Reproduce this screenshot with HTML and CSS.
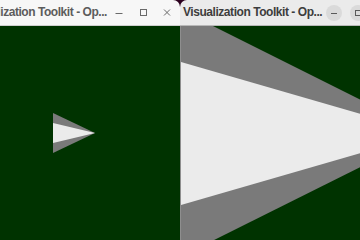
FILE: index.html
```html
<!DOCTYPE html>
<html>
<head>
<meta charset="utf-8">
<link rel="stylesheet" href="styles.css">
</head>
<body>
<div class="desktop">
  <div class="window win-left">
    <div class="titlebar tb-left">
      <span class="title">Visualization Toolkit - Op...</span>
      <div class="controls">
        <span class="btn"><svg width="10" height="10" viewBox="0 0 10 10"><path d="M1.5 5.5h7" stroke="#6a6a6a" stroke-width="1"/></svg></span>
        <span class="btn"><svg width="10" height="10" viewBox="0 0 10 10"><rect x="2.5" y="1.5" width="6" height="6" fill="none" stroke="#6a6a6a" stroke-width="1"/></svg></span>
        <span class="btn"><svg width="10" height="10" viewBox="0 0 10 10"><path d="M2 1.5l6 6M8 1.5l-6 6" stroke="#6a6a6a" stroke-width="1"/></svg></span>
      </div>
    </div>
    <div class="content">
      <svg class="scene" width="180" height="214" viewBox="0 0 180 214">
        <polygon points="53,87 95,107 53,127" fill="#7a7a7a"/>
        <polygon points="53,97 95,107 53,117" fill="#ebebeb"/>
      </svg>
    </div>
  </div>
  <div class="window win-right">
    <div class="titlebar tb-right">
      <span class="title">Visualization Toolkit - Op...</span>
      <div class="rcontrols">
        <span class="rbtn"><svg width="16" height="16" viewBox="0 0 16 16"><path d="M5 8.5h6" stroke="#5a5a5a" stroke-width="1"/></svg></span>
        <span class="rbtn"><svg width="16" height="16" viewBox="0 0 16 16"><rect x="5.5" y="5.5" width="5" height="5" fill="none" stroke="#5a5a5a" stroke-width="1"/></svg></span>
      </div>
    </div>
    <div class="content content-right">
      <svg class="scene" width="220" height="214" viewBox="0 0 220 214">
        <polygon points="0,-16 247,107.5 0,230.5" fill="#7a7a7a"/>
        <polygon points="0,36 247,107.5 0,179" fill="#ebebeb"/>
      </svg>
    </div>
  </div>
</div>
</body>
</html>
```
FILE: styles.css
```css
html, body {
  margin: 0;
  padding: 0;
}
body {
  width: 360px;
  height: 240px;
  overflow: hidden;
  background: #2c001e;
}
.desktop {
  width: 360px;
  height: 240px;
  display: flex;
  overflow: hidden;
  background: #2c001e;
}
.window {
  display: flex;
  flex-direction: column;
  flex: 0 0 auto;
  height: 240px;
  overflow: hidden;
}
.win-left {
  width: 180px;
  border-top-right-radius: 7px;
}
.win-right {
  width: 220px;
  border-top-left-radius: 7px;
}
.titlebar {
  height: 25px;
  border-bottom: 1px solid #cfcfcf;
  display: flex;
  align-items: center;
  flex: 0 0 auto;
  font-family: "Liberation Sans", Arial, sans-serif;
  font-weight: bold;
  font-size: 12px;
  letter-spacing: -0.45px;
  white-space: nowrap;
}
.tb-left {
  background: #f7f7f7;
  color: #5c5c5c;
  justify-content: flex-end;
}
.tb-right {
  background: #ebebeb;
  color: #3d3d3d;
  padding-left: 3px;
  border-bottom-color: #b8b8b8;
}
.title {
  flex: 0 0 auto;
  line-height: 25px;
}
.controls {
  display: flex;
  flex: 0 0 auto;
  margin-right: 1px;
}
.btn {
  width: 24px;
  height: 25px;
  display: flex;
  align-items: center;
  justify-content: center;
}
.btn svg {
  margin-top: 1px;
}
.rcontrols {
  display: flex;
  gap: 8px;
  margin-left: 4px;
  flex: 0 0 auto;
}
.rbtn {
  width: 16px;
  height: 16px;
  border-radius: 50%;
  background: #dadada;
  display: flex;
}
.content {
  flex: 1 1 auto;
  background: #003300;
  overflow: hidden;
}
.content-right {
  border-left: 1px solid #8e8e8e;
}
.scene {
  display: block;
}
```
